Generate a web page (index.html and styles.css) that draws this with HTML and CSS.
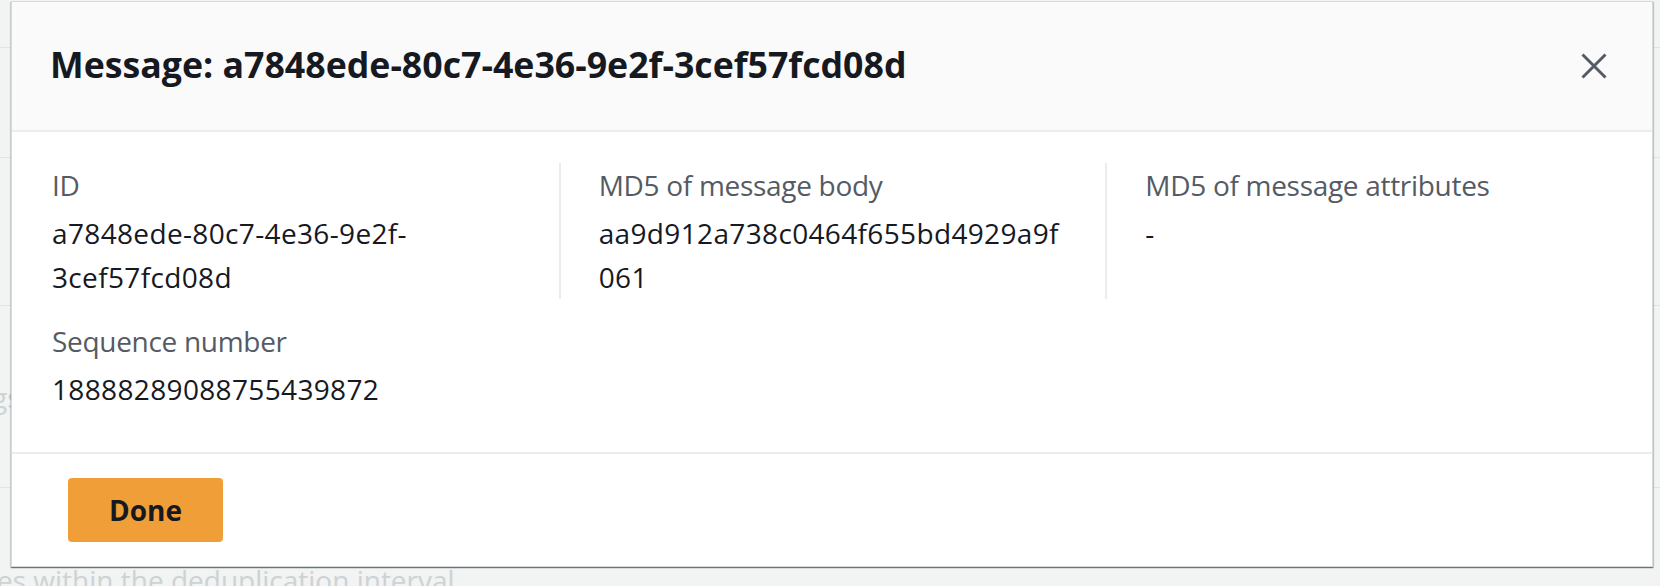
FILE: index.html
```html
<!DOCTYPE html>
<html lang="en">
<head>
<meta charset="utf-8">
<title>Message details</title>
<link rel="stylesheet" href="styles.css">
</head>
<body>
  <div class="page">
    <div class="bg-row r1"></div>
    <div class="bg-row r2"></div>
    <div class="bg-row r3"></div>
    <div class="bg-row r4"><span class="bg-text bg-gs">gs</span></div>
    <div class="bg-row r5"><span class="bg-text bg-es">es within the deduplication interval</span></div>
  </div>

  <div class="modal" role="dialog" aria-labelledby="modal-title">
    <header class="modal-header">
      <h2 class="modal-title" id="modal-title">Message: a7848ede-80c7-4e36-9e2f-3cef57fcd08d</h2>
      <button class="close-btn" aria-label="Close">
        <svg width="26" height="26" viewBox="0 0 26 26" aria-hidden="true">
          <path d="M1.5 1.5 L24.5 24.5 M24.5 1.5 L1.5 24.5" stroke="#545b64" stroke-width="3" fill="none"/>
        </svg>
      </button>
    </header>

    <div class="modal-body">
      <div class="kv-grid">
        <div class="kv">
          <div class="kv-label">ID</div>
          <div class="kv-value">a7848ede-80c7-4e36-9e2f-3cef57fcd08d</div>
        </div>
        <div class="kv divided">
          <div class="kv-label">MD5 of message body</div>
          <div class="kv-value">aa9d912a738c0464f655bd4929a9f061</div>
        </div>
        <div class="kv divided">
          <div class="kv-label">MD5 of message attributes</div>
          <div class="kv-value">-</div>
        </div>
        <div class="kv">
          <div class="kv-label">Sequence number</div>
          <div class="kv-value">18888289088755439872</div>
        </div>
      </div>
    </div>

    <footer class="modal-footer">
      <button class="btn-primary">Done</button>
    </footer>
  </div>
</body>
</html>
```

FILE: styles.css
```css
* {
  box-sizing: border-box;
}

html, body {
  margin: 0;
  padding: 0;
  height: 100%;
}

body {
  background: #f2f3f3;
  font-family: "Open Sans", "Noto Sans", "Liberation Sans", sans-serif;
  overflow: hidden;
  position: relative;
}

/* Underlying page (behind the modal) */
.page {
  display: flex;
  flex-direction: column;
}

.bg-row {
  border-bottom: 1px solid #e0e4e4;
}

.r1 { height: 48px; }
.r2 { height: 110px; }
.r3 { height: 148px; }
.r4 { height: 182px; padding-top: 69px; }
.r5 { border-bottom: 0; padding-top: 70px; }

.bg-text {
  display: block;
  font-size: 28px;
  line-height: 44px;
  color: #cdd2d3;
  white-space: nowrap;
}

.bg-gs { margin-left: -8px; }
.bg-es { margin-left: -3px; }

/* Modal */
.modal {
  position: absolute;
  top: 1px;
  left: 11px;
  width: 1642px;
  background: #ffffff;
  border: 1px solid #d5dbdb;
  box-shadow: 0 1px 1px 0 rgba(0, 28, 36, 0.45),
              1px 1px 1px 0 rgba(0, 28, 36, 0.15),
              -1px 1px 1px 0 rgba(0, 28, 36, 0.1);
}

.modal-header {
  display: flex;
  align-items: center;
  height: 130px;
  padding: 0 45px 0 38px;
  background: #fafafa;
  border-bottom: 2px solid #eaeded;
}

.modal-title {
  flex: 1;
  margin: -5px 0 0 0;
  font-size: 35.7px;
  line-height: 48px;
  font-weight: 700;
  color: #16191f;
}

.close-btn {
  width: 26px;
  height: 26px;
  padding: 0;
  border: 0;
  background: none;
  cursor: pointer;
}

.close-btn svg {
  display: block;
}

.modal-body {
  padding: 31px 0 41px;
}

.kv-grid {
  display: grid;
  grid-template-columns: repeat(3, minmax(0, 1fr));
  row-gap: 20px;
}

.kv {
  padding: 0 42px 0 38px;
  border-left: 2px solid transparent;
}

.kv.divided {
  border-left-color: #eaeded;
}

.kv-label {
  font-size: 28px;
  line-height: 44px;
  letter-spacing: -0.3px;
  color: #545b64;
  margin-bottom: 4px;
}

.kv-value {
  font-size: 28px;
  line-height: 44px;
  letter-spacing: 0.35px;
  color: #16191f;
  overflow-wrap: anywhere;
}

.modal-footer {
  border-top: 2px solid #eaeded;
  padding: 24px 56px;
}

.btn-primary {
  display: flex;
  align-items: center;
  justify-content: center;
  width: 155px;
  height: 64px;
  padding: 0;
  border: 0;
  border-radius: 4px;
  background: #f09e38;
  font-family: inherit;
  font-size: 28px;
  font-weight: 700;
  color: #16191f;
  cursor: pointer;
}
```
